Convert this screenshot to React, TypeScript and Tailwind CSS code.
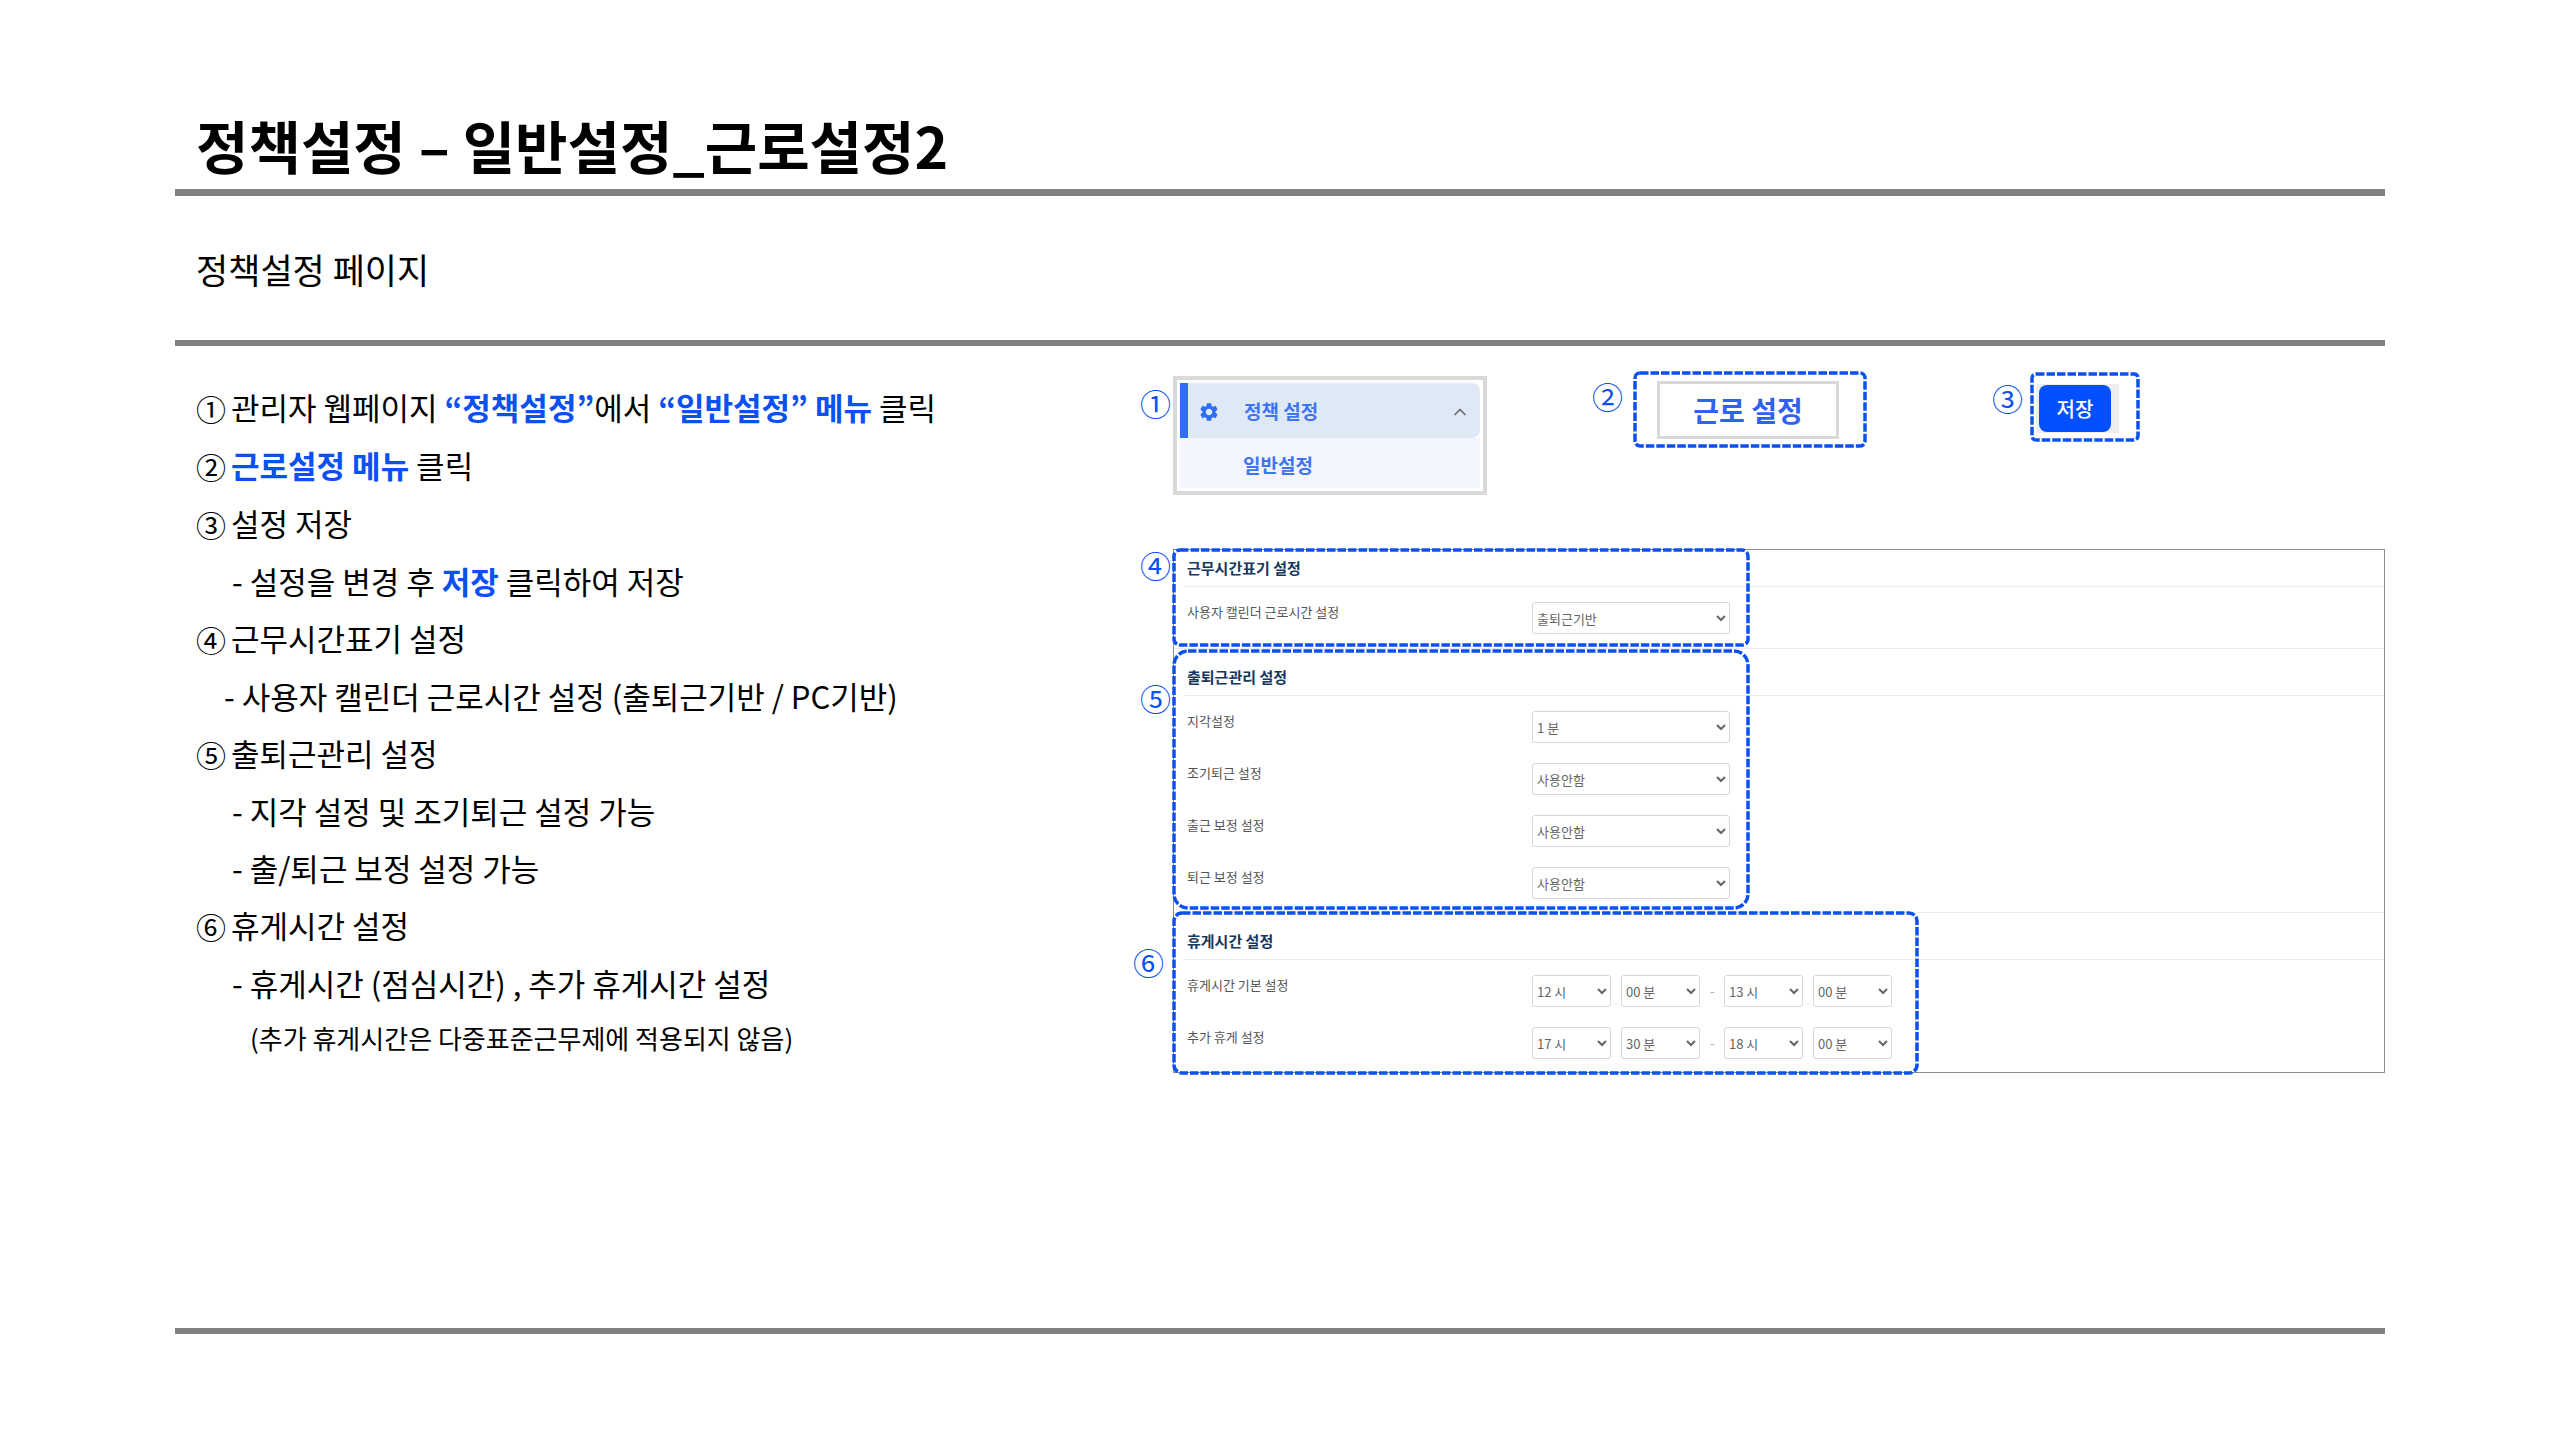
import React from 'react';
import { MdSettings } from 'react-icons/md';
import { ChevronUp } from 'lucide-react';

const Mark: React.FC<{ className?: string; children: React.ReactNode }> = ({ className = '', children }) => (
  <span className={`block w-[30px] shrink-0 text-center text-[31px] leading-[30px] text-[#0b50f0] ${className}`}>
    {children}
  </span>
);

// Dashed highlight that lies over whatever it marks
const Outline: React.FC<{ className: string; radius: number }> = ({ className, radius }) => (
  <svg className={`pointer-events-none absolute overflow-visible ${className}`} aria-hidden="true">
    <rect
      width="100%"
      height="100%"
      rx={radius}
      fill="none"
      stroke="#0b50f0"
      strokeWidth="3.5"
      strokeDasharray="8.5 2"
    />
  </svg>
);

const Select: React.FC<{ id?: string; label?: string; value: string; className: string }> = ({
  id,
  label,
  value,
  className,
}) => (
  <select
    id={id}
    aria-label={label}
    defaultValue={value}
    className={`h-8 rounded-[3px] border border-[#d5d5d5] bg-white text-[13px] text-[#666] ${className}`}
  >
    <option>{value}</option>
  </select>
);

const Row: React.FC<{ id?: string; label: string; children: React.ReactNode }> = ({ id, label, children }) => (
  <div className="flex items-start">
    <label htmlFor={id} className="w-[347px] shrink-0 pl-0.5 text-[13px] leading-5 text-[#555]">
      {label}
    </label>
    {children}
  </div>
);

const SectionTitle: React.FC<{ children: React.ReactNode }> = ({ children }) => (
  <h2 className="border-b border-[#ececec] pl-0.5 text-[15px] leading-9 font-bold text-[#17375e]">{children}</h2>
);

const attendance = [
  { id: 'late', label: '지각설정', value: '1 분' },
  { id: 'early-leave', label: '조기퇴근 설정', value: '사용안함' },
  { id: 'in-adjust', label: '출근 보정 설정', value: '사용안함' },
  { id: 'out-adjust', label: '퇴근 보정 설정', value: '사용안함' },
];

const breaks = [
  { id: 'break', label: '휴게시간 기본 설정', times: ['12 시', '00 분', '13 시', '00 분'] },
  { id: 'extra-break', label: '추가 휴게 설정', times: ['17 시', '30 분', '18 시', '00 분'] },
];

const Step: React.FC<{ no: string; children: React.ReactNode }> = ({ no, children }) => (
  <p className="flex leading-[58px]">
    <span className="w-[35px] pt-0.5 text-[30px] leading-[56px]">{no}</span>
    <span>{children}</span>
  </p>
);

const Sub: React.FC<{ className?: string; children: React.ReactNode }> = ({ className = 'pl-9', children }) => (
  <p className={`leading-[57px] ${className}`}>{children}</p>
);

const Key: React.FC<{ children: React.ReactNode }> = ({ children }) => (
  <strong className="font-bold text-[#0b50f0]">{children}</strong>
);

export default function App() {
  return (
    <div className="min-h-screen bg-white px-[175px] pt-[105px] font-['Noto_Sans_CJK_KR',sans-serif] text-black">
      <header>
        <h1 className="border-b-[7px] border-[#808080] pb-[5px] pl-[21px] text-[57px] leading-[79px] font-bold">
          정책설정 – 일반설정_근로설정2
        </h1>
        <p className="border-b-[6px] border-[#808080] pt-[49px] pb-[47px] pl-[21px] text-[35px] leading-[48px]">
          정책설정 페이지
        </p>
      </header>

      <main className="grid grid-cols-[965fr_1245fr] border-b-[6px] border-[#808080] pb-[255px]">
        <section className="pt-8 pl-[21px] text-[31px] whitespace-nowrap">
          <Step no="①">
            관리자 웹페이지 <Key>“정책설정”</Key>에서 <Key>“일반설정” 메뉴</Key> 클릭
          </Step>
          <Step no="②">
            <Key>근로설정 메뉴</Key> 클릭
          </Step>
          <Step no="③">설정 저장</Step>
          <Sub>
            - 설정을 변경 후 <Key>저장</Key> 클릭하여 저장
          </Sub>
          <Step no="④">근무시간표기 설정</Step>
          <Sub className="pl-7">- 사용자 캘린더 근로시간 설정 (출퇴근기반 / PC기반)</Sub>
          <Step no="⑤">출퇴근관리 설정</Step>
          <Sub>- 지각 설정 및 조기퇴근 설정 가능</Sub>
          <Sub>- 출/퇴근 보정 설정 가능</Sub>
          <Step no="⑥">휴게시간 설정</Step>
          <Sub>- 휴게시간 (점심시간) , 추가 휴게시간 설정</Sub>
          <p className="pl-[54px] text-[26px] leading-[54px]">(추가 휴게시간은 다중표준근무제에 적용되지 않음)</p>
        </section>

        <section className="pt-[25px]">
          <div className="grid h-[178px] grid-cols-[452fr_400fr_393fr] items-start">
            <div className="flex items-start gap-[3px] pt-[5px]">
              <Mark className="mt-3">①</Mark>
              <nav className="w-[314px] border-4 border-[#d9d9d9] p-[3px] text-[19px] font-bold text-[#3f74ee]">
                <button
                  type="button"
                  className="flex h-[55px] w-full items-center rounded-r-lg border-l-8 border-[#2f6df6] bg-[#dfe9f6] pt-0.5 pl-2.5 text-left"
                >
                  <MdSettings className="mr-6 size-[22px] text-[#2f6df6]" />
                  정책 설정
                  <ChevronUp className="mr-2.5 ml-auto size-5 text-[#666]" />
                </button>
                <a href="#general" className="block bg-[#f2f5fd] pt-1 pl-[63px] leading-[46px]">
                  일반설정
                </a>
              </nav>
            </div>

            <div className="flex items-start gap-[11px]">
              <Mark className="mt-2.5">②</Mark>
              <div className="relative px-6 py-2.5">
                <Outline className="top-0.5 left-0.5 h-[73px] w-[230px]" radius={5} />
                <a
                  href="#work"
                  className="block w-[182px] border-[3px] border-[#d9d9d9] text-center text-[28px] leading-[52px] font-bold text-[#2f62f0]"
                >
                  근로 설정
                </a>
              </div>
            </div>

            <div className="flex items-start gap-2">
              <Mark className="mt-3">③</Mark>
              <div className="relative px-1.5 py-[13px]">
                <Outline className="top-[3px] left-0.5 h-[66px] w-[106px]" radius={4} />
                <div className="bg-[#eeeeee] py-px pr-2 pl-[3px]">
                  <button
                    type="button"
                    className="block h-[47px] w-[72px] rounded-lg bg-[#0050ff] text-[20px] font-medium text-white"
                  >
                    저장
                  </button>
                </div>
              </div>
            </div>
          </div>

          <div className="ml-[33px] border border-[#8c8c8c]">
            <div className="relative border-b border-[#ececec] pb-3.5 pl-[11px]">
              <Outline className="top-0 left-0 h-[95px] w-[574px]" radius={6} />
              <Mark className="absolute top-0 -left-[34px]">④</Mark>
              <SectionTitle>근무시간표기 설정</SectionTitle>
              <div className="pt-[15px]">
                <Row id="calendar" label="사용자 캘린더 근로시간 설정">
                  <Select id="calendar" value="출퇴근기반" className="w-[198px]" />
                </Row>
              </div>
            </div>

            <div className="relative border-b border-[#ececec] pt-2.5 pb-[13px] pl-[11px]">
              <Outline className="top-0.5 left-0 h-[257px] w-[574px]" radius={14} />
              <Mark className="absolute top-[34px] -left-[34px]">⑤</Mark>
              <SectionTitle>출퇴근관리 설정</SectionTitle>
              <div className="flex flex-col gap-5 pt-[15px]">
                {attendance.map((row) => (
                  <Row key={row.id} id={row.id} label={row.label}>
                    <Select id={row.id} value={row.value} className="w-[198px]" />
                  </Row>
                ))}
              </div>
            </div>

            <div className="relative pt-2.5 pb-[13px] pl-[11px]">
              <Outline className="top-0 left-0 h-[160px] w-[743px]" radius={8} />
              <Mark className="absolute top-[34px] -left-[41px]">⑥</Mark>
              <SectionTitle>휴게시간 설정</SectionTitle>
              <div className="flex flex-col gap-5 pt-[15px]">
                {breaks.map((row) => (
                  <Row key={row.id} id={row.id} label={row.label}>
                    <div className="flex items-center gap-2.5 text-[13px] text-[#aaa]">
                      <Select id={row.id} value={row.times[0]} className="w-[79px]" />
                      <Select label="시작 분" value={row.times[1]} className="w-[79px]" />
                      <span className="w-1 text-center">-</span>
                      <Select label="종료 시" value={row.times[2]} className="w-[79px]" />
                      <Select label="종료 분" value={row.times[3]} className="w-[79px]" />
                    </div>
                  </Row>
                ))}
              </div>
            </div>
          </div>
        </section>
      </main>
    </div>
  );
}
